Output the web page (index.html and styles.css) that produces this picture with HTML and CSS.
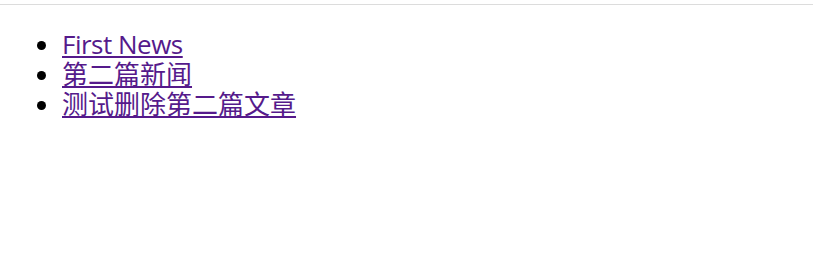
FILE: index.html
```html
<!DOCTYPE html>
<html>
<head>
<meta charset="utf-8">
<link rel="stylesheet" href="styles.css">
</head>
<body>
<div class="topbar"></div>
<ul class="news">
  <li><a class="latin" href="#">First News</a></li>
  <li><a href="#">第二篇新闻</a></li>
  <li><a href="#">测试删除第二篇文章</a></li>
</ul>
</body>
</html>
```

FILE: styles.css
```css
html, body {
  margin: 0;
  padding: 0;
  background: #fff;
}
body {
  font-family: "Open Sans", "Noto Sans CJK SC", sans-serif;
  font-size: 26px;
  line-height: 1.15;
  color: #000;
}
.topbar {
  height: 4px;
  border-bottom: 1px solid #dcdcdc;
}
.news {
  margin: 25px 0 0 0;
  padding-left: 62px;
}
.news a {
  color: #551a8b;
  text-decoration: underline;
}
.news a.latin {
  letter-spacing: -0.5px;
}
```
